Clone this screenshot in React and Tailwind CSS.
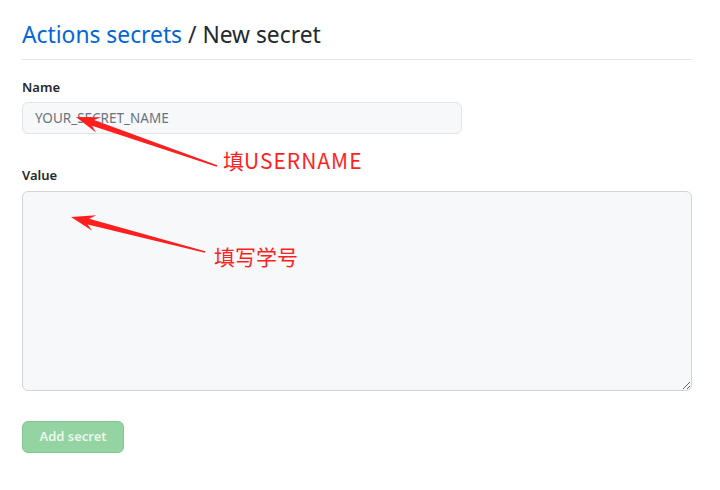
import React from "react";

const font = { fontFamily: "'Noto Sans', 'Liberation Sans', sans-serif" };
const cjk = { fontFamily: "'Noto Sans CJK SC', 'Noto Sans', sans-serif" };

// tapered red arrow, like a screenshot annotation
const arrowPoints = (tail, tip) => {
  const dx = tip[0] - tail[0];
  const dy = tip[1] - tail[1];
  const len = Math.hypot(dx, dy);
  const u = [dx / len, dy / len];
  const n = [-u[1], u[0]];
  const at = (s, o) => [tip[0] - u[0] * s + n[0] * o, tip[1] - u[1] * s + n[1] * o];
  const pts = [
    tip,
    at(24, 8),
    at(18, 3),
    [tail[0] + n[0] * 0.8, tail[1] + n[1] * 0.8],
    [tail[0] - n[0] * 0.8, tail[1] - n[1] * 0.8],
    at(18, -3),
    at(24, -8),
  ];
  return pts.map((p) => p.join(",")).join(" ");
};

export default function App() {
  return (
    <div className="relative w-[720px] h-[490px] bg-white" style={font}>
      <div className="flex flex-col px-[22px] pt-[20px] w-[714px]">
        <h2 className="text-[22.8px] leading-[30px] text-[#24292e] pb-[9px] border-b border-[#e1e4e8] font-normal">
          <span className="text-[#0366d6]">Actions secrets</span> / New secret
        </h2>

        <label className="mt-[17px] text-[13px] leading-[20px] font-semibold text-[#24292e]">
          Name
        </label>
        <input
          placeholder="YOUR_SECRET_NAME"
          className="mt-[5px] w-[440px] h-[32px] px-[12px] text-[13.5px] bg-[#f6f8fa] border border-[#e1e4e8] rounded-md text-[#24292e] placeholder:text-[#6a737d] outline-none"
        />

        <label className="mt-[31px] text-[13px] leading-[20px] font-semibold text-[#24292e]">
          Value
        </label>
        <textarea className="mt-[6px] w-[670px] h-[200px] bg-[#f6f8fa] border border-[#d1d5da] rounded-md outline-none" />

        <button className="mt-[30px] w-[102px] h-[32px] rounded-md bg-[#94d3a2] border border-[#84c693] text-[13px] font-semibold text-[#eaf7ec]">
          Add secret
        </button>
      </div>

      {/* annotations */}
      <svg className="absolute inset-0 pointer-events-none" width="720" height="490">
        <polygon points={arrowPoints([217, 166], [76, 117])} fill="#ff1f1f" />
        <polygon points={arrowPoints([205, 252], [71, 217])} fill="#ff1f1f" />
      </svg>
      <div className="absolute left-[223px] top-[146px] text-[21px] leading-[28px] text-[#ff1f1f]" style={cjk}>
        填<span className="tracking-[1px]">USERNAME</span>
      </div>
      <div className="absolute left-[214px] top-[242px] text-[21px] leading-[28px] text-[#ff1f1f]" style={cjk}>
        填写学号
      </div>
    </div>
  );
}
